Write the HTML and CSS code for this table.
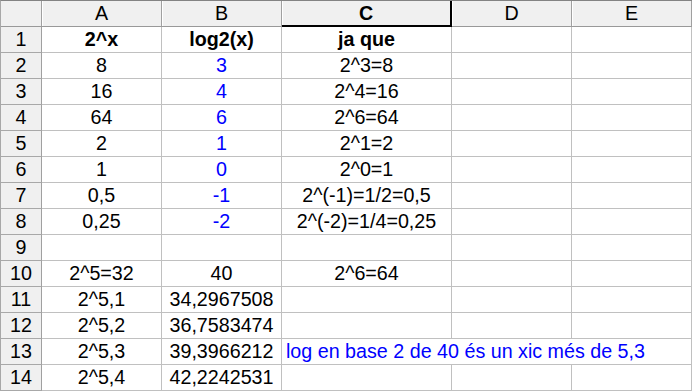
FILE: index.html
```html
<!DOCTYPE html>
<html>
<head>
<meta charset="utf-8">
<link rel="stylesheet" href="styles.css">
</head>
<body>
<div class="sheet">
  <div class="hd corner"></div>
  <div class="hd col">A</div>
  <div class="hd col">B</div>
  <div class="hd col sel">C</div>
  <div class="hd col">D</div>
  <div class="hd col">E</div>

  <div class="hd rh">1</div><div class="c b">2^x</div><div class="c b">log2(x)</div><div class="c b">ja que</div><div class="c"></div><div class="c"></div>
  <div class="hd rh">2</div><div class="c">8</div><div class="c blue">3</div><div class="c">2^3=8</div><div class="c"></div><div class="c"></div>
  <div class="hd rh">3</div><div class="c">16</div><div class="c blue">4</div><div class="c">2^4=16</div><div class="c"></div><div class="c"></div>
  <div class="hd rh">4</div><div class="c">64</div><div class="c blue">6</div><div class="c">2^6=64</div><div class="c"></div><div class="c"></div>
  <div class="hd rh">5</div><div class="c">2</div><div class="c blue">1</div><div class="c">2^1=2</div><div class="c"></div><div class="c"></div>
  <div class="hd rh">6</div><div class="c">1</div><div class="c blue">0</div><div class="c">2^0=1</div><div class="c"></div><div class="c"></div>
  <div class="hd rh">7</div><div class="c">0,5</div><div class="c blue">-1</div><div class="c">2^(-1)=1/2=0,5</div><div class="c"></div><div class="c"></div>
  <div class="hd rh">8</div><div class="c">0,25</div><div class="c blue">-2</div><div class="c">2^(-2)=1/4=0,25</div><div class="c"></div><div class="c"></div>
  <div class="hd rh">9</div><div class="c"></div><div class="c"></div><div class="c"></div><div class="c"></div><div class="c"></div>
  <div class="hd rh">10</div><div class="c">2^5=32</div><div class="c">40</div><div class="c">2^6=64</div><div class="c"></div><div class="c"></div>
  <div class="hd rh">11</div><div class="c">2^5,1</div><div class="c">34,2967508</div><div class="c"></div><div class="c"></div><div class="c"></div>
  <div class="hd rh">12</div><div class="c">2^5,2</div><div class="c">36,7583474</div><div class="c"></div><div class="c"></div><div class="c"></div>
  <div class="hd rh">13</div><div class="c">2^5,3</div><div class="c">39,3966212</div><div class="c span3 blue left">log en base 2 de 40 és un xic més de 5,3</div>
  <div class="hd rh">14</div><div class="c">2^5,4</div><div class="c">42,2242531</div><div class="c"></div><div class="c"></div><div class="c"></div>
</div>
</body>
</html>
```
FILE: styles.css
```css
html, body {
  margin: 0;
  padding: 0;
  background: #ffffff;
}

.sheet {
  display: grid;
  grid-template-columns: 41px 120px 120px 170px 120px 120px;
  grid-auto-rows: 26px;
  width: 691px;
  border-top: 1px solid #838383;
  border-left: 1px solid #a8a8a8;
  font-family: "Liberation Sans", Arial, sans-serif;
  font-size: 19.7px;
  color: #000000;
}

.c, .hd {
  box-sizing: border-box;
  display: flex;
  align-items: center;
  justify-content: center;
  white-space: nowrap;
  line-height: 1;
  padding-top: 1px;
  border-right: 1px solid #c0c0c0;
  border-bottom: 1px solid #c0c0c0;
}

.hd {
  background: #f0f0f0;
  border-color: #a0a0a0;
}

.col {
  border-bottom-color: #999999;
  box-shadow: inset 1px 0 0 #ffffff;
}

.corner {
  border-bottom-color: #999999;
}

.rh {
  border-right-color: #a0a0a0;
  border-bottom-color: #a8a8a8;
}

.sel {
  font-weight: bold;
  border-right: 2px solid #000000;
  border-bottom: 2px solid #000000;
}

.b {
  font-weight: bold;
}

.blue {
  color: #0000ff;
}

.span3 {
  grid-column: span 3;
}

.left {
  justify-content: flex-start;
  padding-left: 4px;
}
```
